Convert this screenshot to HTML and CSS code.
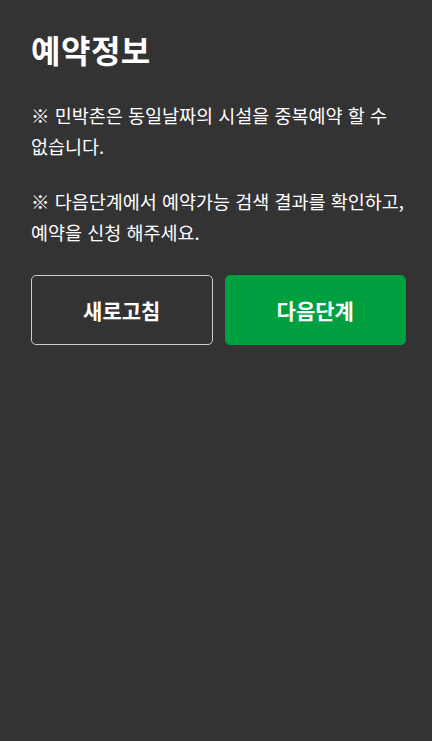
FILE: index.html
```html
<!DOCTYPE html>
<html lang="ko">
<head>
<meta charset="utf-8">
<title>예약정보</title>
<link rel="stylesheet" href="styles.css">
</head>
<body>
<main class="page">
  <h1 class="title">예약정보</h1>
  <p class="note">※ 민박촌은 동일날짜의 시설을 중복예약 할 수 없습니다.</p>
  <p class="note">※ 다음단계에서 예약가능 검색 결과를 확인하고, 예약을 신청 해주세요.</p>
  <div class="actions">
    <button class="btn btn-outline" type="button">새로고침</button>
    <button class="btn btn-primary" type="button">다음단계</button>
  </div>
</main>
</body>
</html>
```
FILE: styles.css
```css
html, body {
  margin: 0;
  padding: 0;
  background: #333333;
  height: 100%;
}
body {
  font-family: "Noto Sans CJK KR", "Noto Sans", sans-serif;
  color: #ffffff;
}
.page {
  padding: 27px 26px 0 31px;
}
.title {
  margin: 0;
  font-size: 32px;
  line-height: 44px;
  font-weight: 700;
  letter-spacing: 0.5px;
}
.note {
  margin: 0;
  font-size: 18.5px;
  line-height: 31px;
  word-break: keep-all;
}
.title + .note {
  margin-top: 29px;
}
.note + .note {
  margin-top: 24px;
}
.actions {
  margin-top: 27px;
  display: grid;
  grid-template-columns: 1fr 1fr;
  gap: 12px;
}
.btn {
  height: 70px;
  border-radius: 5px;
  font-family: inherit;
  font-size: 21px;
  font-weight: 700;
  color: #ffffff;
  cursor: pointer;
}
.btn-outline {
  background: transparent;
  border: 1px solid #cccccc;
}
.btn-primary {
  background: #00a040;
  border: 1px solid #00a040;
}
```
